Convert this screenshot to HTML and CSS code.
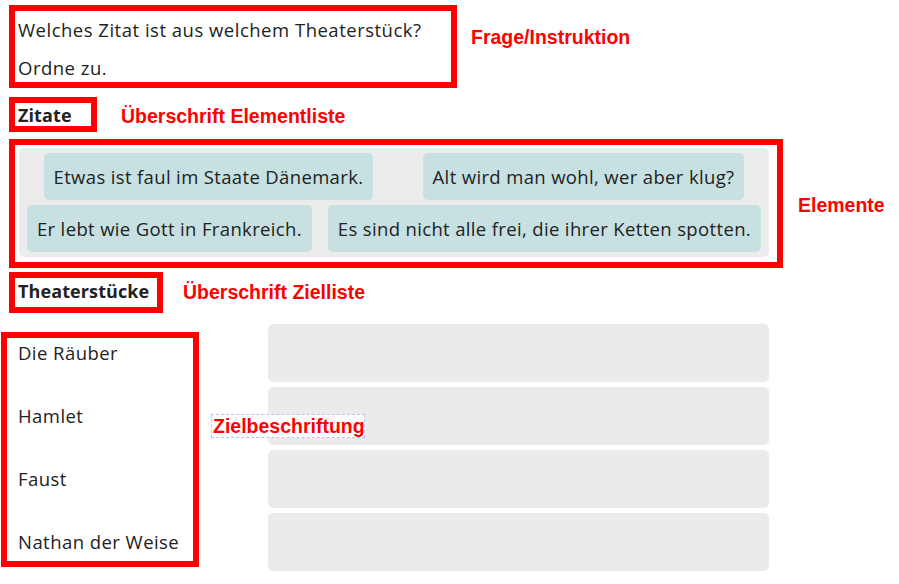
FILE: index.html
```html
<!DOCTYPE html>
<html lang="de">
<head>
<meta charset="utf-8">
<title>Zuordnung</title>
<link rel="stylesheet" href="styles.css">
</head>
<body>
<div class="page">
  <section class="row row-question">
    <div class="frame question">
      <p class="qline">Welches Zitat ist aus welchem Theaterstück?</p>
      <p class="qline">Ordne zu.</p>
    </div>
    <span class="note note-question">Frage/Instruktion</span>
  </section>

  <section class="row row-head1">
    <div class="frame head head-quotes">Zitate</div>
    <span class="note note-head1">Überschrift Elementliste</span>
  </section>

  <section class="row row-elements">
    <div class="frame elements">
      <div class="pool">
        <div class="chip">Etwas ist faul im Staate Dänemark.</div>
        <div class="chip">Alt wird man wohl, wer aber klug?</div>
        <div class="chip">Er lebt wie Gott in Frankreich.</div>
        <div class="chip">Es sind nicht alle frei, die ihrer Ketten spotten.</div>
      </div>
    </div>
    <span class="note note-elements">Elemente</span>
  </section>

  <section class="row row-head2">
    <div class="frame head head-plays">Theaterstücke</div>
    <span class="note note-head2">Überschrift Zielliste</span>
  </section>

  <section class="targets">
    <div class="frame labels">
      <div class="label">Die Räuber</div>
      <div class="label">Hamlet</div>
      <div class="label">Faust</div>
      <div class="label">Nathan der Weise</div>
    </div>
    <div class="slots">
      <div class="slot"></div>
      <div class="slot"></div>
      <div class="slot"></div>
      <div class="slot"></div>
    </div>
    <span class="note note-target">Zielbeschriftung</span>
  </section>
</div>
</body>
</html>
```

FILE: styles.css
```css
* {
  box-sizing: border-box;
}

html, body {
  margin: 0;
  padding: 0;
  background: #ffffff;
}

body {
  font-family: "Open Sans", Lato, sans-serif;
  font-size: 18.5px;
  letter-spacing: 0.45px;
  color: #222222;
}

.page {
  width: 899px;
  height: 584px;
  overflow: hidden;
}

.row {
  display: flex;
  align-items: flex-start;
}

.frame {
  border: 6px solid #ff0000;
  background: #ffffff;
}

.note {
  font-family: "Liberation Sans", Arial, sans-serif;
  font-weight: bold;
  font-size: 19.5px;
  letter-spacing: 0;
  line-height: 20px;
  color: #ff0000;
  white-space: nowrap;
}

/* Question */
.row-question {
  padding-top: 5px;
}

.question {
  margin-left: 9px;
  width: 448px;
  height: 83px;
  padding: 0 3px;
}

.qline {
  margin: 0;
  line-height: 38px;
  letter-spacing: 0.5px;
}

.note-question {
  margin-left: 14px;
  margin-top: 22px;
}

/* Headings */
.head {
  margin-left: 9px;
  padding-left: 3px;
  font-size: 18px;
  font-weight: bold;
  letter-spacing: 0.1px;
  white-space: nowrap;
}

.row-head1 {
  margin-top: 9px;
}

.head-quotes {
  width: 88px;
  height: 35px;
  line-height: 25px;
}

.note-head1 {
  margin-left: 24px;
  margin-top: 9px;
}

/* Elements */
.row-elements {
  margin-top: 7px;
}

.elements {
  margin-left: 9px;
  width: 774px;
  height: 129px;
  padding: 3px 8px 5px 4px;
}

.pool {
  background: #ececec;
  border-radius: 5px;
  height: 109px;
  padding: 5px 0;
  display: flex;
  flex-wrap: wrap;
  justify-content: space-around;
  align-content: flex-start;
  row-gap: 5px;
}

.chip {
  background: #c7e0e1;
  border-radius: 5px;
  height: 47px;
  line-height: 47px;
  padding: 0 10px;
  white-space: nowrap;
  letter-spacing: 0.35px;
}

.note-elements {
  margin-left: 15px;
  margin-top: 56px;
}

/* Heading 2 */
.row-head2 {
  margin-top: 4px;
}

.head-plays {
  width: 154px;
  height: 41px;
  line-height: 25px;
  padding-top: 1px;
}

.note-head2 {
  margin-left: 20px;
  margin-top: 10px;
}

/* Targets */
.targets {
  position: relative;
  display: flex;
  align-items: flex-start;
}

.labels {
  margin-left: 1px;
  margin-top: 19px;
  width: 198px;
  height: 235px;
  padding: 1px 0 0 11px;
  display: flex;
  flex-direction: column;
  gap: 36px;
}

.label {
  line-height: 27px;
  white-space: nowrap;
}

.slots {
  margin-left: 69px;
  margin-top: 11px;
  width: 501px;
  display: flex;
  flex-direction: column;
  gap: 5px;
}

.slot {
  height: 58px;
  background: #ebebeb;
  border-radius: 5px;
}

.note-target {
  position: absolute;
  left: 211px;
  top: 101px;
  width: 154px;
  height: 24px;
  padding-left: 1px;
  border: 1px dashed #bdbdf0;
  background: #ffffff;
  line-height: 22px;
}
```
